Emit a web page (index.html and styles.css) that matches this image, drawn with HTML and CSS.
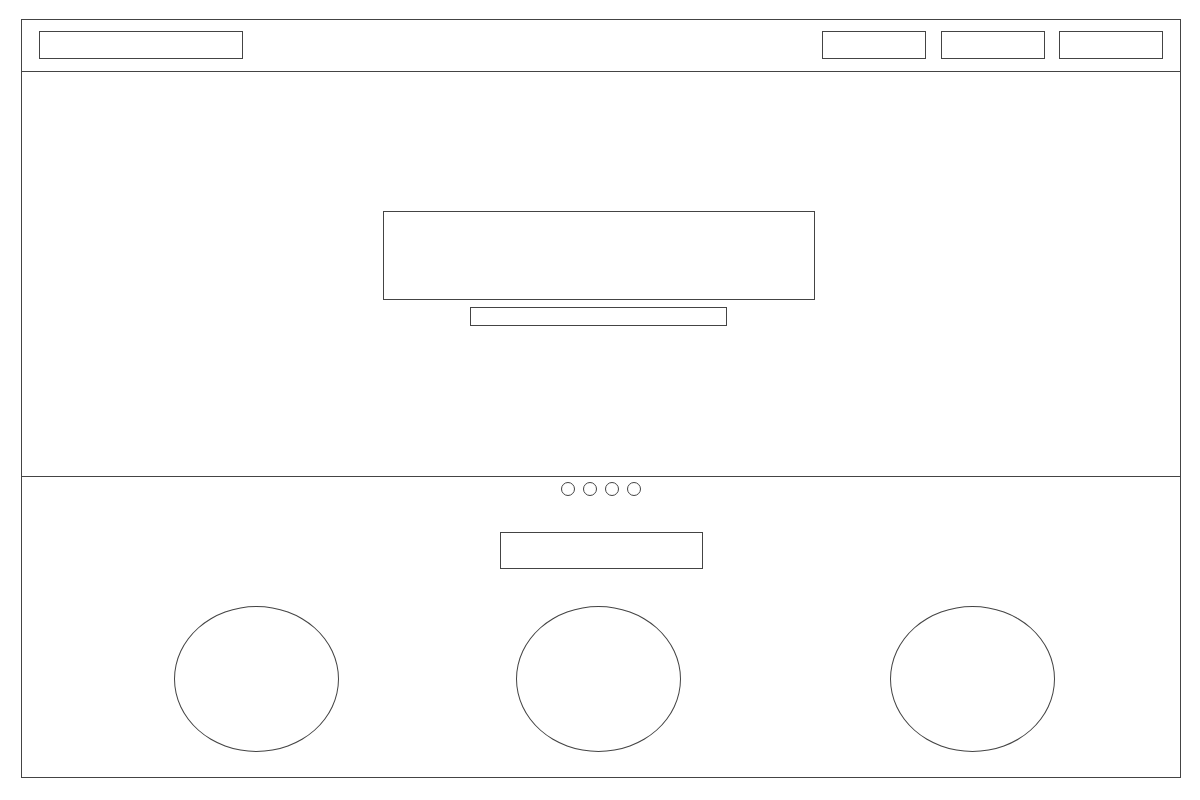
FILE: index.html
```html
<!DOCTYPE html>
<html>
<head>
    <title>Wireframe</title>
    <link rel="stylesheet" href="styles.css">
</head>
<body>
    <div class="frame">
        <header class="header">
            <div class="box logo"></div>
            <nav class="nav">
                <div class="box nav-item"></div>
                <div class="box nav-item"></div>
                <div class="box nav-item"></div>
            </nav>
        </header>

        <section class="hero">
            <div class="box hero-title"></div>
            <div class="box hero-sub"></div>
        </section>

        <section class="content">
            <div class="dots">
                <span class="dot"></span>
                <span class="dot"></span>
                <span class="dot"></span>
                <span class="dot"></span>
            </div>
            <div class="box cta"></div>
            <div class="features">
                <div class="feature"></div>
                <div class="feature"></div>
                <div class="feature"></div>
            </div>
        </section>
    </div>
</body>
</html>
```

FILE: styles.css
```css
* {
    box-sizing: border-box;
}
body {
    margin: 0;
    background: #fff;
    font-family: "Liberation Sans", Arial, sans-serif;
}
.frame {
    margin: 19px 0 0 21px;
    width: 1160px;
    height: 759px;
    border: 1px solid #444;
    display: flex;
    flex-direction: column;
}
.box {
    border: 1px solid #444;
}
.header {
    height: 52px;
    padding: 11px 17px 0 17px;
    border-bottom: 1px solid #444;
    display: flex;
    justify-content: space-between;
    align-items: flex-start;
}
.logo {
    width: 204px;
    height: 28px;
}
.nav {
    display: flex;
    gap: 14px;
}
.nav-item {
    width: 104px;
    height: 28px;
}
.nav-item:first-child {
    margin-right: 1px;
}
.hero {
    height: 405px;
    padding: 139px 5px 0 0;
    border-bottom: 1px solid #444;
    display: flex;
    flex-direction: column;
    align-items: center;
    gap: 7px;
}
.hero-title {
    width: 432px;
    height: 89px;
}
.hero-sub {
    width: 257px;
    height: 19px;
}
.content {
    flex: 1;
    padding-top: 5px;
    display: flex;
    flex-direction: column;
    align-items: center;
}
.dots {
    display: flex;
    gap: 8px;
}
.dot {
    width: 14px;
    height: 14px;
    border: 1px solid #444;
    border-radius: 50%;
}
.cta {
    margin-top: 36px;
    width: 203px;
    height: 37px;
}
.features {
    align-self: stretch;
    margin-top: 37px;
    padding-left: 152px;
    display: grid;
    grid-template-columns: 342px 374px 165px;
}
.feature {
    width: 165px;
    height: 146px;
    border: 1px solid #444;
    border-radius: 50%;
}
```
